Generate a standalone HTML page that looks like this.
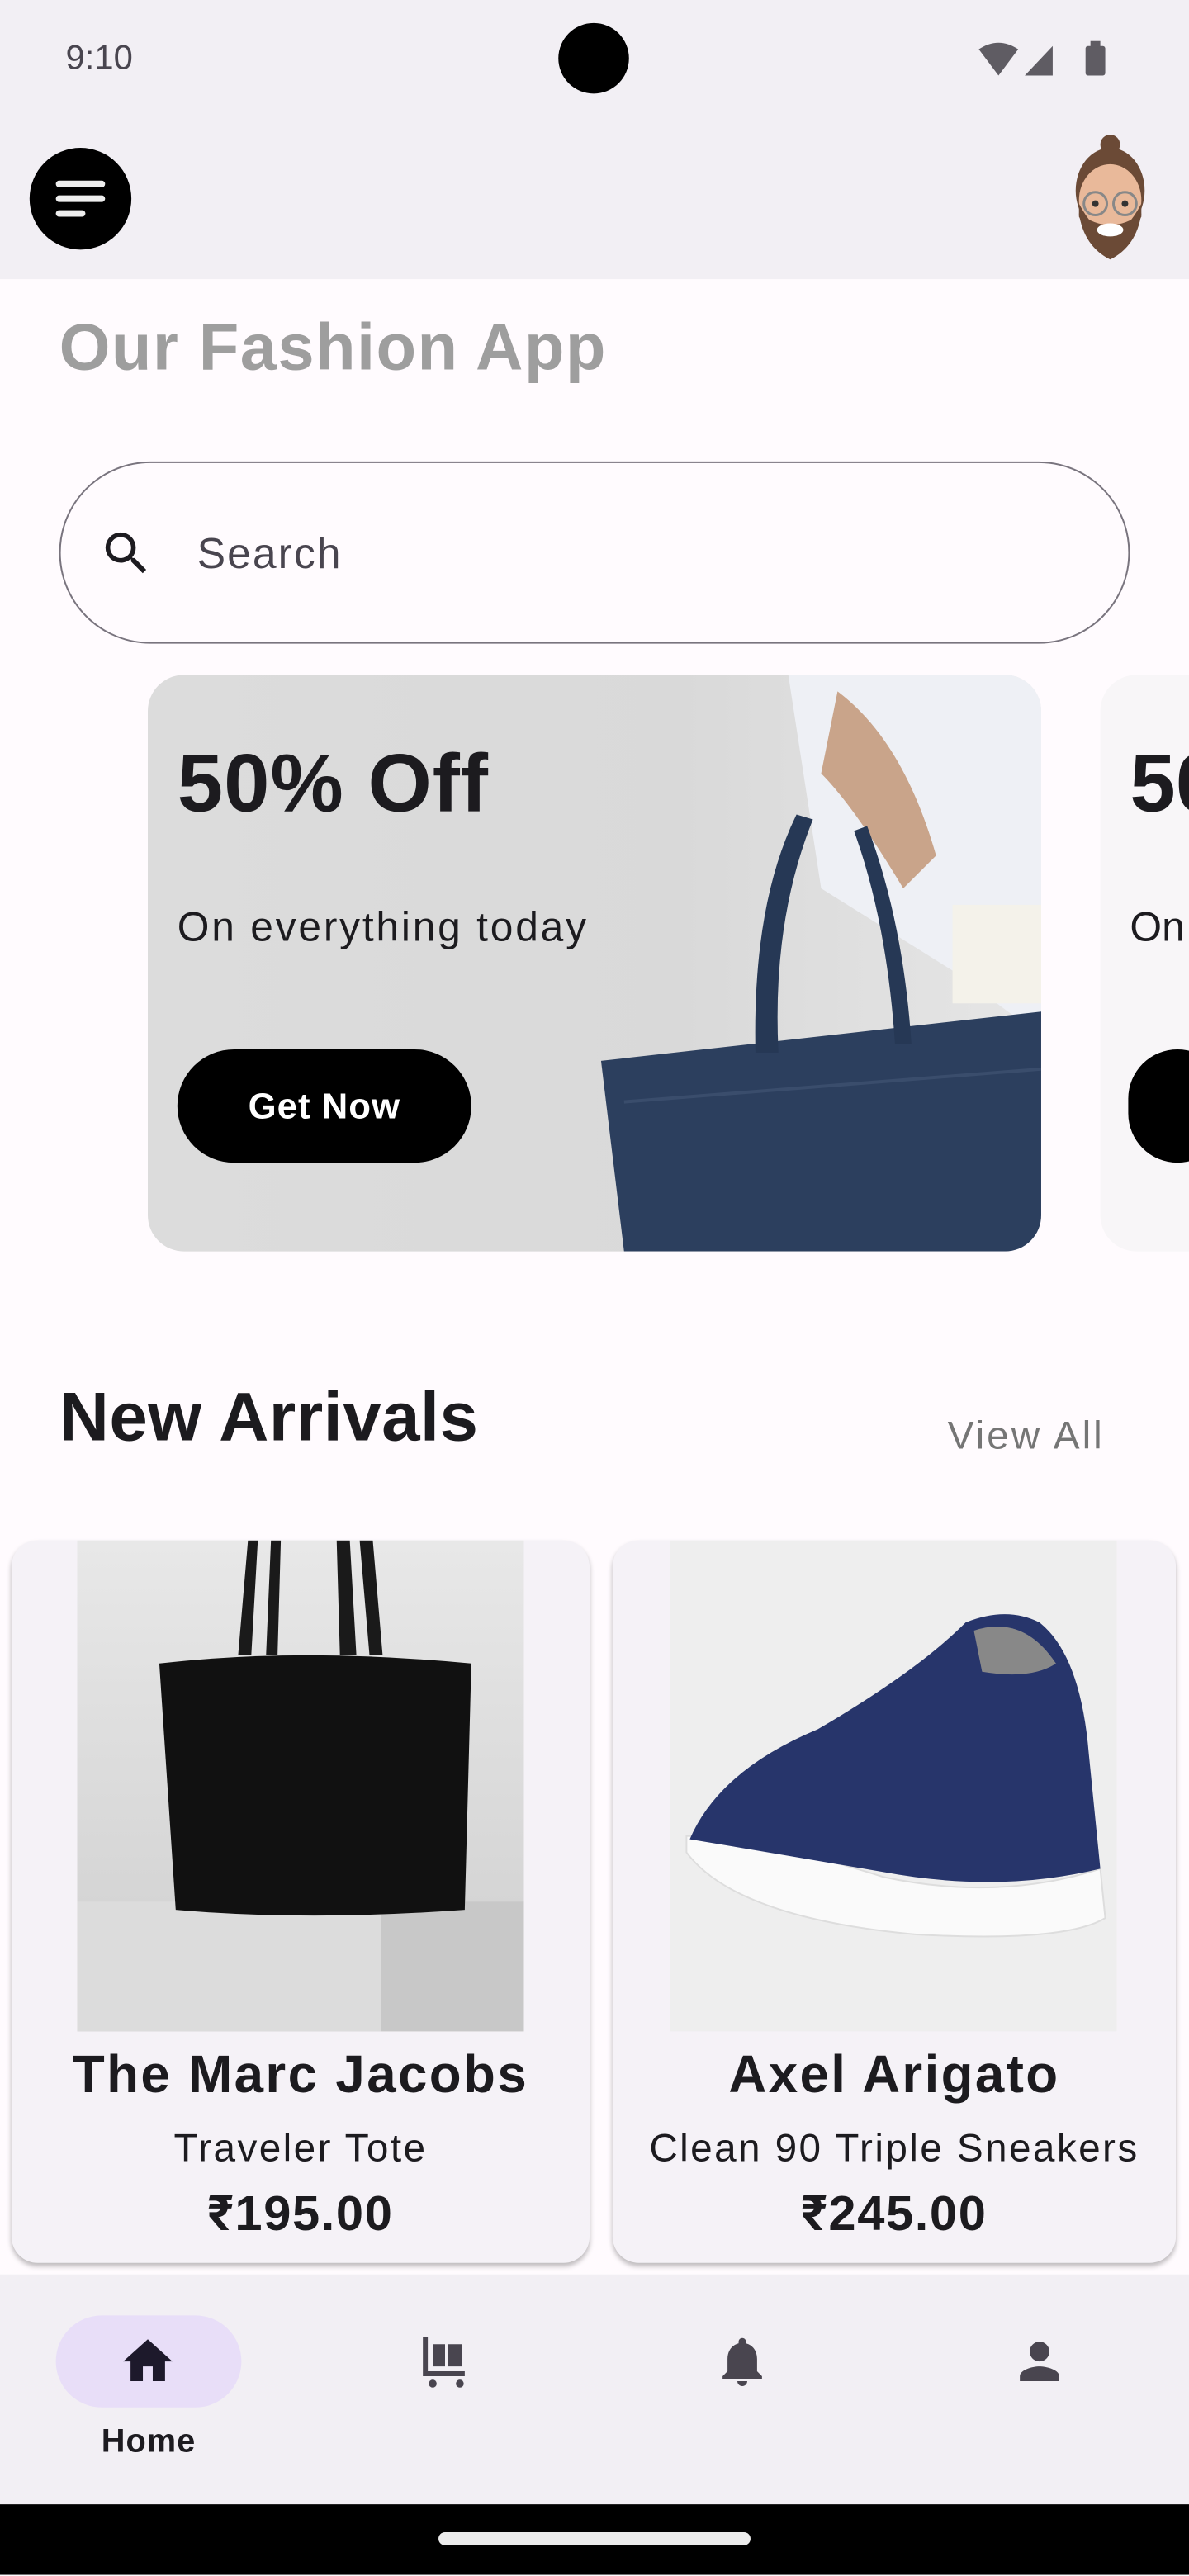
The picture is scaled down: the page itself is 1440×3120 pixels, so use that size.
<!DOCTYPE html>
<html><head><meta charset="utf-8"><style>
html,body{margin:0;padding:0;width:1440px;height:3120px;overflow:hidden;background:#fffbfe;}
#w{position:absolute;left:0;top:0;width:724px;height:1568px;transform:scale(1.98895);transform-origin:0 0;font-family:"Liberation Sans",Roboto,sans-serif;background:#fffbfe;overflow:hidden;}
.a{position:absolute;}
</style></head><body><div id="w">
<div class="a" style="left:0;top:0;width:724px;height:170px;background:#f2eff4;"></div>
<div class="a" style="left:40px;top:24px;font-size:21px;color:#49454f;">9:10</div>
<div class="a" style="left:340px;top:14px;width:43px;height:43px;border-radius:50%;background:#000;"></div>
<svg class="a" style="left:594px;top:24px" width="86" height="24" viewBox="0 0 86 24"><path d="M2 6 Q14 -2 26 6 L14 22Z" fill="#5f5c63"/><path d="M30 22 L47 4 L47 22Z" fill="#5f5c63"/><rect x="67" y="4" width="12" height="18" rx="1.5" fill="#5f5c63"/><rect x="70" y="1" width="6" height="4" fill="#5f5c63"/></svg>
<div class="a" style="left:18px;top:90px;width:62px;height:62px;border-radius:50%;background:#000;"></div>
<div class="a" style="left:34px;top:110px;width:30px;height:4px;background:#eee;border-radius:2px"></div>
<div class="a" style="left:34px;top:119px;width:30px;height:4px;background:#eee;border-radius:2px"></div>
<div class="a" style="left:34px;top:128px;width:18px;height:4px;background:#eee;border-radius:2px"></div>
<svg class="a" style="left:648px;top:80px" width="56" height="80" viewBox="0 0 56 80"><circle cx="28" cy="8" r="6" fill="#6b4a36"/><ellipse cx="28" cy="36" rx="21" ry="26" fill="#6b4a36"/><ellipse cx="28" cy="42" rx="19" ry="22" fill="#e9b99a"/><path d="M9 44 Q28 80 47 44 L47 52 Q28 86 9 52Z" fill="#6b4a36"/><path d="M9 50 Q28 64 47 50 Q44 70 28 78 Q12 70 9 50Z" fill="#6b4a36"/><ellipse cx="28" cy="60" rx="8" ry="4" fill="#fff"/><circle cx="19" cy="44" r="7" fill="none" stroke="#888" stroke-width="1.5"/><circle cx="37" cy="44" r="7" fill="none" stroke="#888" stroke-width="1.5"/><circle cx="19" cy="44" r="2" fill="#333"/><circle cx="37" cy="44" r="2" fill="#333"/></svg>

<div class="a" style="left:36px;top:190px;font-size:40px;font-weight:bold;color:#9e9e9e;letter-spacing:0.7px;">Our Fashion App</div>
<div class="a" style="left:36px;top:281px;width:650px;height:109px;border:1.5px solid #79747e;border-radius:56px;"></div>
<svg class="a" style="left:60px;top:320px" width="34" height="34" viewBox="0 0 24 24"><path d="M15.5 14h-.79l-.28-.27A6.47 6.47 0 0 0 16 9.5 6.5 6.5 0 1 0 9.5 16c1.61 0 3.09-.59 4.23-1.57l.27.28v.79l5 4.99L20.49 19l-4.99-5zm-6 0C7.01 14 5 11.99 5 9.5S7.01 5 9.5 5 14 7.01 14 9.5 11.99 14 9.5 14z" fill="#1d1b20"/></svg>
<div class="a" style="left:120px;top:322px;font-size:26px;color:#49454f;letter-spacing:1px;">Search</div>

<div class="a" style="left:90px;top:411px;width:544px;height:351px;border-radius:22px;background:linear-gradient(90deg,#dcdcdc,#d9d9d9 60%,#e6e6e6);overflow:hidden;">
<svg class="a" style="left:260px;top:0" width="284" height="351" viewBox="0 0 284 351"><path d="M130 0 L284 0 L284 220 L230 180 L150 130 Z" fill="#eef0f5"/><path d="M160 10 Q200 40 220 110 L200 130 Q170 80 150 60Z" fill="#c9a48a"/><rect x="230" y="140" width="54" height="60" fill="#f4f2ea"/><path d="M16 235 L284 205 L284 351 L30 351 Z" fill="#2c3f5e"/><path d="M110 230 Q108 140 135 85 L145 88 Q120 150 124 230Z" fill="#263855"/><path d="M195 225 Q190 150 170 95 L178 92 Q200 150 205 225Z" fill="#263855"/><path d="M30 260 L284 240" stroke="#3a4d6c" stroke-width="2"/></svg>
</div>
<div class="a" style="left:108px;top:448px;font-size:50px;font-weight:bold;color:#1c1b1f;letter-spacing:0.5px;">50% Off</div>
<div class="a" style="left:108px;top:551px;font-size:25px;color:#1c1b1f;letter-spacing:1.4px;">On everything today</div>
<div class="a" style="left:108px;top:639px;width:179px;height:69px;border-radius:35px;background:#000;color:#fff;font-size:22px;font-weight:bold;text-align:center;line-height:70px;letter-spacing:0.5px;">Get Now</div>
<div class="a" style="left:670px;top:411px;width:80px;height:351px;border-radius:22px;background:#f8f6f8;"></div>
<div class="a" style="left:688px;top:448px;font-size:50px;font-weight:bold;color:#1c1b1f;">50</div>
<div class="a" style="left:688px;top:551px;font-size:25px;color:#1c1b1f;">On</div>
<div class="a" style="left:687px;top:639px;width:60px;height:69px;border-radius:35px;background:#000;"></div>

<div class="a" style="left:36px;top:839px;font-size:42px;font-weight:bold;color:#1c1b1f;letter-spacing:0.2px;">New Arrivals</div>
<div class="a" style="left:577px;top:861px;font-size:24px;color:#757575;letter-spacing:1.5px;">View All</div>

<div class="a" style="left:7px;top:938px;width:352px;height:440px;border-radius:16px;background:#f5f2f7;box-shadow:0 2px 3px rgba(0,0,0,.25);overflow:hidden;">
<div class="a" style="left:40px;top:0;width:272px;height:299px;background:linear-gradient(180deg,#e8e8e8,#d6d6d6 70%,#cfcfcf);">
<div class="a" style="left:0;top:220px;width:272px;height:79px;background:#dcdcdc;"></div>
<div class="a" style="left:185px;top:220px;width:87px;height:79px;background:#c8c8c8;"></div>
<svg class="a" style="left:0;top:0" width="272" height="240" viewBox="0 0 272 240"><path d="M98 70 L104 0 L110 0 L106 70Z M160 70 L158 0 L166 0 L170 70Z M115 70 L118 0 L124 0 L122 70Z M178 70 L172 0 L180 0 L186 70Z" fill="#1a1a1a"/><path d="M50 75 Q135 65 240 75 L236 225 Q140 232 60 225 Z" fill="#111"/></svg>
</div>
<div class="a" style="left:0;top:307px;width:352px;text-align:center;font-size:32px;font-weight:bold;color:#1c1b1f;letter-spacing:1.2px;">The Marc Jacobs</div>
<div class="a" style="left:0;top:357px;width:352px;text-align:center;font-size:24px;color:#1c1b1f;letter-spacing:1.2px;">Traveler Tote</div>
<div class="a" style="left:0;top:393px;width:352px;text-align:center;font-size:30px;font-weight:bold;color:#1c1b1f;letter-spacing:0.8px;">₹195.00</div>
</div>

<div class="a" style="left:373px;top:938px;width:343px;height:440px;border-radius:16px;background:#f5f2f7;box-shadow:0 2px 3px rgba(0,0,0,.25);overflow:hidden;">
<div class="a" style="left:35px;top:0;width:272px;height:299px;background:#eeeeee;">
<svg class="a" style="left:0;top:30px" width="272" height="230" viewBox="0 0 272 230"><path d="M10 160 Q40 200 150 210 Q240 215 265 200 L262 170 Q200 190 130 175 Q50 150 10 150Z" fill="#fafafa" stroke="#ddd"/><path d="M12 152 Q30 110 90 85 Q150 50 180 20 Q205 10 225 20 Q250 40 255 100 L262 170 Q200 185 130 172 Q60 160 12 152Z" fill="#27356b"/><path d="M185 25 Q215 15 235 45 Q220 55 190 50Z" fill="#888"/></svg>
</div>
<div class="a" style="left:0;top:307px;width:343px;text-align:center;font-size:32px;font-weight:bold;color:#1c1b1f;letter-spacing:1.2px;">Axel Arigato</div>
<div class="a" style="left:0;top:357px;width:343px;text-align:center;font-size:24px;color:#1c1b1f;letter-spacing:1.2px;">Clean 90 Triple Sneakers</div>
<div class="a" style="left:0;top:393px;width:343px;text-align:center;font-size:30px;font-weight:bold;color:#1c1b1f;letter-spacing:0.8px;">₹245.00</div>
</div>

<div class="a" style="left:0;top:1385px;width:724px;height:140px;background:#f2eff4;"></div>
<div class="a" style="left:34px;top:1410px;width:113px;height:56px;border-radius:28px;background:#e8def8;"></div>
<svg class="a" style="left:72px;top:1420px" width="36" height="36" viewBox="0 0 24 24"><path d="M10 20v-6h4v6h5v-8h3L12 3 2 12h3v8z" fill="#1d192b"/></svg>
<div class="a" style="left:34px;top:1476px;width:113px;text-align:center;font-size:20px;font-weight:bold;color:#1d1b20;letter-spacing:0.5px;">Home</div>
<svg class="a" style="left:253px;top:1420px" width="36" height="36" viewBox="0 0 24 24"><path d="M3 2h2v14h15v2H3zM7 5h5v9H7zM13 5h6v9h-6z" fill="#49454f"/><circle cx="7" cy="21" r="1.6" fill="#49454f"/><circle cx="18" cy="21" r="1.6" fill="#49454f"/></svg>
<svg class="a" style="left:434px;top:1420px" width="36" height="36" viewBox="0 0 24 24"><path d="M12 22c1.1 0 2-.9 2-2h-4c0 1.1.89 2 2 2zm6-6v-5c0-3.07-1.640-5.64-4.5-6.32V4c0-.83-.67-1.5-1.5-1.5s-1.5.67-1.5 1.5v.68C7.63 5.36 6 7.92 6 11v5l-2 2v1h16v-1l-2-2z" fill="#49454f"/></svg>
<svg class="a" style="left:615px;top:1420px" width="36" height="36" viewBox="0 0 24 24"><path d="M12 12c2.21 0 4-1.790 4-4s-1.79-4-4-4-4 1.79-4 4 1.79 4 4 4zm0 2c-2.67 0-8 1.34-8 4v2h16v-2c0-2.660-5.33-4-8-4z" fill="#49454f"/></svg>
<div class="a" style="left:0;top:1525px;width:724px;height:43px;background:#000;"></div>
<div class="a" style="left:267px;top:1542px;width:190px;height:8px;border-radius:4px;background:#ebebeb;"></div>
</div></body></html>
